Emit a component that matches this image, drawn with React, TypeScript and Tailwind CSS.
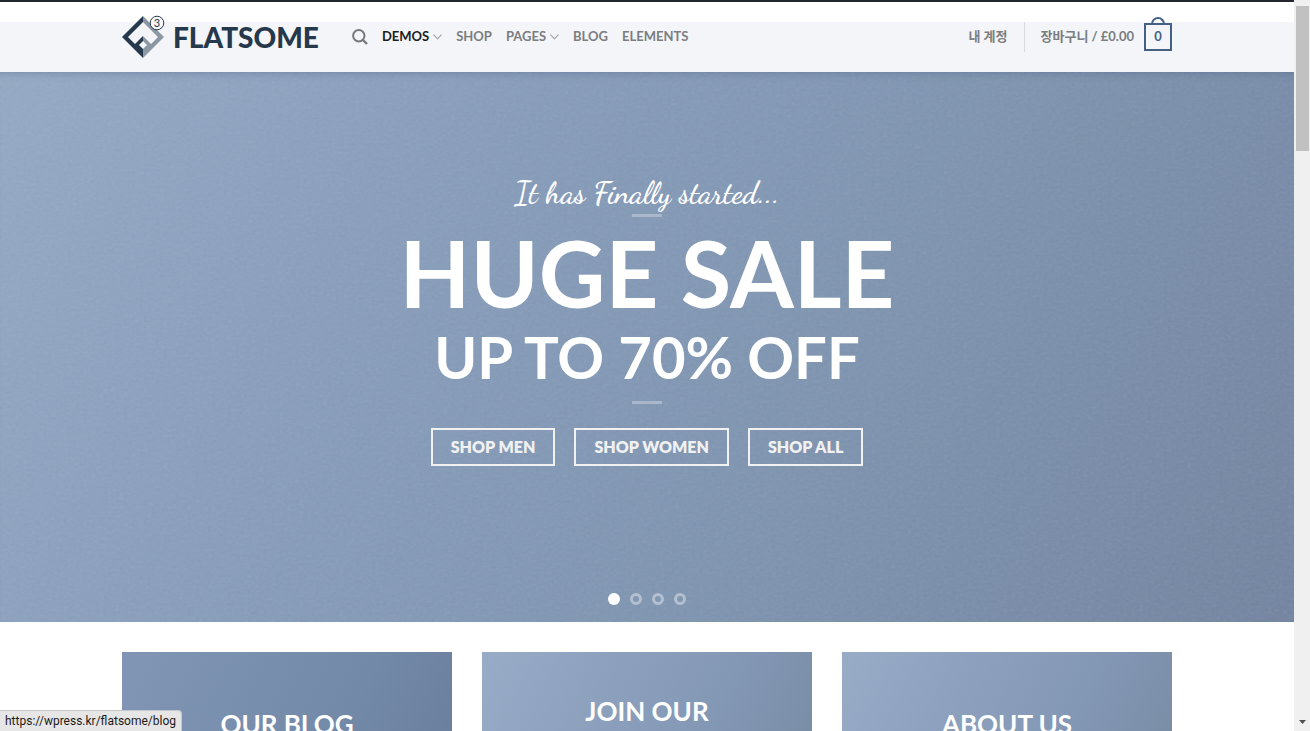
import React from "react";

const navItems = [
  { label: "DEMOS", active: true, dropdown: true },
  { label: "SHOP", active: false, dropdown: false },
  { label: "PAGES", active: false, dropdown: true },
  { label: "BLOG", active: false, dropdown: false },
  { label: "ELEMENTS", active: false, dropdown: false },
];

function Logo() {
  return (
    <a href="#" className="flex items-center gap-2 text-[#26384c]">
      <svg width="43" height="44" viewBox="0 0 43 44" fill="none">
        <path
          d="M21 1 V7 L6 22 L13 29 L21 21 V26 L17 30 L21 34 V43 L0 22 Z"
          fill="#26384c"
        />
        <path
          d="M21 1 V7 L36 22 L29 29 L21 21 V26 L25 30 L21 34 V43 L42 22 Z"
          fill="#8b97a3"
        />
        <circle cx="35" cy="8" r="6.8" fill="#f8f9fb" stroke="#26384c" />
        <text
          x="35"
          y="12"
          textAnchor="middle"
          fontSize="11"
          fontWeight="400"
          fontFamily="Lato, sans-serif"
          fill="#26384c"
        >
          3
        </text>
      </svg>
      <span className="text-[28px] leading-8 font-black">FLATSOME</span>
    </a>
  );
}

function Chevron() {
  return (
    <svg width="9" height="6" viewBox="0 0 9 6" fill="none" stroke="#a3a5a8">
      <path d="M0.5 0.7 L4.5 4.9 L8.5 0.7" strokeWidth="1.2" />
    </svg>
  );
}

function Header() {
  return (
    <header className="border-t-2 border-[#23272b] bg-[linear-gradient(#fff_20px,#f3f5f9_20px)]">
      <div className="mx-auto flex h-[70px] max-w-[1080px] items-center px-[15px] text-[13px] font-bold text-[#7b7d80]">
        <Logo />
        <nav className="ml-[33px] flex items-center gap-[14px]">
          <button aria-label="Search">
            <svg
              width="16"
              height="16"
              viewBox="0 0 16 16"
              fill="none"
              stroke="#77797c"
              strokeWidth="2"
            >
              <circle cx="6.8" cy="6.8" r="5.7" />
              <path d="M11 11 L15 15" strokeWidth="2.4" />
            </svg>
          </button>
          {navItems.map((item) => (
            <a
              key={item.label}
              href="#"
              className={
                item.active
                  ? "flex items-center gap-1 text-[#1c1d1f]"
                  : "flex items-center gap-1"
              }
            >
              {item.label}
              {item.dropdown && <Chevron />}
            </a>
          ))}
        </nav>
        <div className="ml-auto flex items-center">
          <a href="#" className="pr-4">
            내 계정
          </a>
          <a
            href="#"
            className="flex h-[30px] items-center gap-[10px] border-l border-[#d8dade] pl-4"
          >
            장바구니 / £0.00
            <span className="relative flex h-7 w-7 items-center justify-center border-2 border-[#446084] text-[#446084]">
              <span className="absolute bottom-full left-1/2 h-2 w-[14px] -translate-x-1/2 rounded-t-full border-2 border-b-0 border-[#446084]"></span>
              0
            </span>
          </a>
        </div>
      </div>
    </header>
  );
}

function Divider() {
  return <div className="h-[3px] w-[30px] bg-white/30"></div>;
}

// woven fabric grain over the hero background
function Fabric() {
  return (
    <svg className="absolute inset-0 h-full w-full opacity-10" aria-hidden="true">
      <filter id="fabric">
        <feTurbulence
          type="fractalNoise"
          baseFrequency="0.25 0.35"
          numOctaves="2"
        />
        <feColorMatrix type="saturate" values="0" />
      </filter>
      <rect width="100%" height="100%" filter="url(#fabric)" />
    </svg>
  );
}

function Hero() {
  return (
    <section className="relative bg-[linear-gradient(120deg,#94a9c5_0%,#869cba_35%,#7e94b0_62%,#7384a1_100%)] text-white">
      <Fabric />
      <div className="relative flex h-[550px] flex-col items-center pt-[100px] inset-shadow-[0_8px_8px_-8px_rgba(60,80,110,0.4)]">
        <p className="font-['Dancing_Script',cursive] text-[31px] leading-[42px] font-semibold">
          It has Finally started...
        </p>
        <Divider />
        <h2 className="mt-[10px] text-[92px] leading-[92px] font-bold">
          HUGE SALE
        </h2>
        <h3 className="mt-[9px] text-[58px] leading-[58px] font-bold">
          UP TO 70% OFF
        </h3>
        <div className="mt-[15px]">
          <Divider />
        </div>
        <div className="mt-6 flex gap-[19px] text-base leading-[34px] font-extrabold text-[#f1f1f1]">
          <button className="border-2 border-[#f1f1f1] px-[18px]">
            SHOP MEN
          </button>
          <button className="border-2 border-[#f1f1f1] px-[18px]">
            SHOP WOMEN
          </button>
          <button className="border-2 border-[#f1f1f1] px-[18px]">
            SHOP ALL
          </button>
        </div>
        {/* slider dots */}
        <div className="absolute bottom-[17px] flex gap-[10px]">
          <button
            aria-label="Slide 1"
            className="h-3 w-3 rounded-full bg-white"
          ></button>
          {[2, 3, 4].map((n) => (
            <button
              key={n}
              aria-label={`Slide ${n}`}
              className="h-3 w-3 rounded-full border-3 border-white/40"
            ></button>
          ))}
        </div>
      </div>
    </section>
  );
}

function Banners() {
  return (
    <section className="mx-auto grid max-w-[1080px] grid-cols-3 gap-[30px] px-[15px] pt-[30px] text-center text-[26px] leading-[34px] font-bold text-white">
      <a
        href="#"
        className="h-[220px] bg-[linear-gradient(115deg,#8196b5,#7389a8_60%,#667a98)] pt-[55px]"
      >
        OUR BLOG
      </a>
      <a
        href="#"
        className="h-[220px] bg-[linear-gradient(115deg,#98abc7,#8398b5_60%,#74879f)] pt-[42px]"
      >
        JOIN OUR
      </a>
      <a
        href="#"
        className="h-[220px] bg-[linear-gradient(115deg,#98abc7,#8398b5_60%,#74879f)] pt-[55px]"
      >
        ABOUT US
      </a>
    </section>
  );
}

function App() {
  return (
    <div className="flex h-screen overflow-hidden bg-white font-['Lato','Noto_Sans_CJK_KR',sans-serif]">
      <main className="min-w-0 flex-1">
        <Header />
        <Hero />
        <Banners />
      </main>

      {/* scrollbar */}
      <div className="flex w-4 flex-col items-center justify-between bg-[#f0f0f0] pt-[6px] pb-[7px]">
        <div className="h-[145px] w-[13px] bg-[#c1c1c1]"></div>
        <svg width="7" height="4" viewBox="0 0 7 4" fill="#505050">
          <path d="M0 0 H7 L3.5 4 Z" />
        </svg>
      </div>

      {/* link status */}
      <div className="fixed bottom-0 left-0 rounded-tr border-t border-r border-[#c4c8ce] bg-[#e6e6e6] px-[5px] font-['Roboto',sans-serif] text-xs leading-5 text-[#1b1b1b]">
        https://wpress.kr/flatsome/blog
      </div>
    </div>
  );
}

export default App;
